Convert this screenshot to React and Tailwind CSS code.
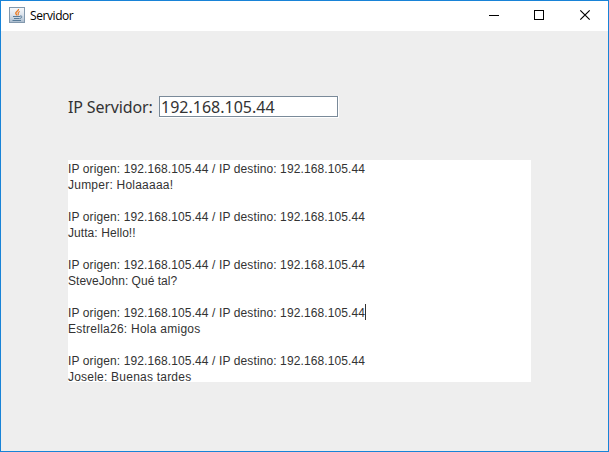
const messages = [
  { id: 1, text: "Jumper: Holaaaaa!", tracking: "tracking-[0.23px]" },
  { id: 2, text: "Jutta: Hello!!", tracking: "tracking-[0.07px]" },
  { id: 3, text: "SteveJohn: Qué tal?", tracking: "tracking-[0.02px]" },
  { id: 4, text: "Estrella26: Hola amigos", tracking: "tracking-[0.25px]", caret: true },
  { id: 5, text: "Josele: Buenas tardes", tracking: "tracking-[0.22px]" },
];

function JavaIcon() {
  return (
    <svg width="16" height="16" viewBox="0 0 16 16" className="shrink-0">
      <defs>
        <linearGradient id="cupTile" x1="0" y1="0" x2="0" y2="1">
          <stop offset="0" stopColor="#f7f9fb" />
          <stop offset="0.5" stopColor="#dbe3ec" />
          <stop offset="1" stopColor="#a9bbcd" />
        </linearGradient>
      </defs>
      <rect x="0.5" y="0.5" width="15" height="15" fill="url(#cupTile)" stroke="#8298ad" />
      <path d="M9.5 2C10 4 6.3 4.5 6.8 6.4C7 7.1 7.7 7.6 7.8 8.3" fill="none" stroke="#ea7a22" strokeWidth="1.4" />
      <path d="M10.8 4.5C8.8 5.2 9 6.1 9.3 6.8C9.5 7.4 9.1 8 8.7 8.4" fill="none" stroke="#ea7a22" strokeWidth="1.1" />
      <path d="M4 9.5H11M5 11.5H10.6M11 9C13.6 8.5 13.5 10.9 11 11.4M3.5 13.5H12" fill="none" stroke="#587c99" strokeWidth="1" />
    </svg>
  );
}

function TitleBar() {
  return (
    <header className="flex h-[30px] shrink-0 items-center bg-white pb-0.5 pl-2">
      <JavaIcon />
      <span className="ml-[5px] grow pt-0.5 font-['Open_Sans','Noto_Sans',sans-serif] text-[12px] leading-4 tracking-[-0.42px] text-black">
        Servidor
      </span>
      <div className="flex h-full">
        {["Minimize", "Maximize", "Close"].map((name) => (
          <button key={name} aria-label={name} className="flex h-full w-[46px] items-center justify-center">
            <svg width="10" height="10" viewBox="0 0 10 10" shapeRendering="crispEdges" fill="none" stroke="#000" className="overflow-visible">
              {name === "Minimize" && <path d="M1 5.5H11" />}
              {name === "Maximize" && <rect x="0.5" y="0.5" width="9" height="9" />}
              {name === "Close" && <path d="M0.3 0.3L9.7 9.7M9.7 0.3L0.3 9.7" shapeRendering="auto" strokeWidth="1.2" />}
            </svg>
          </button>
        ))}
      </div>
    </header>
  );
}

export default function App() {
  return (
    <div className="flex h-[452px] w-[609px] flex-col overflow-hidden border border-[#1883d7] bg-[#eeeeee]">
      <TitleBar />
      <main className="flex flex-col pl-[67px] pt-[65px]">
        <div className="flex h-[22px] items-start font-['Noto_Sans',sans-serif] text-[16px] leading-[21px] text-[#333333]">
          <label htmlFor="ip" className="w-[91px] whitespace-nowrap pt-px tracking-[-0.15px]">IP Servidor:</label>
          <div className="h-[22px] w-[180px] border-b border-r border-white">
            <div id="ip" className="flex h-[21px] w-[179px] items-center border border-[#7a8a99] bg-white pl-px pt-px">
              192.168.105.44
            </div>
          </div>
        </div>
        <section className="mt-[42px] flex h-[222px] w-[463px] flex-col gap-4 bg-white pt-px font-['Liberation_Sans',Arial,sans-serif] text-[12px] leading-4 text-[#333333]">
          {messages.map((m) => (
            <div key={m.id} className="shrink-0 whitespace-nowrap">
              <div className="flex h-4">
                <span className="tracking-[0.11px]">IP origen: 192.168.105.44 / IP destino: 192.168.105.44</span>
                {m.caret && <span className="-mt-px h-4 w-px bg-[#333333]" />}
              </div>
              <div className={"h-4 " + m.tracking}>{m.text}</div>
            </div>
          ))}
        </section>
      </main>
    </div>
  );
}
